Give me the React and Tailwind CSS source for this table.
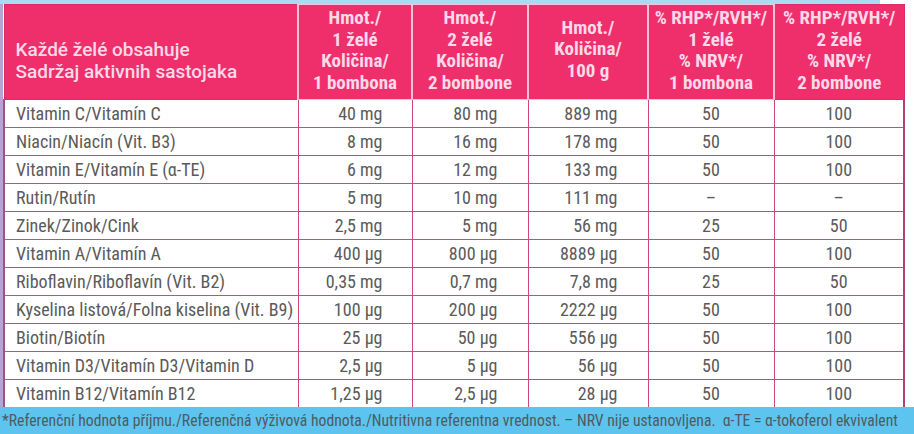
import React from "react";

const rows = [
  ["Vitamin C/Vitamín C", "40 mg", "80 mg", "889 mg", "50", "100"],
  ["Niacin/Niacín (Vit. B3)", "8 mg", "16 mg", "178 mg", "50", "100"],
  ["Vitamin E/Vitamín E (α-TE)", "6 mg", "12 mg", "133 mg", "50", "100"],
  ["Rutin/Rutín", "5 mg", "10 mg", "111 mg", "–", "–"],
  ["Zinek/Zinok/Cink", "2,5 mg", "5 mg", "56 mg", "25", "50"],
  ["Vitamin A/Vitamín A", "400 µg", "800 µg", "8889 µg", "50", "100"],
  ["Riboflavin/Riboflavín (Vit. B2)", "0,35 mg", "0,7 mg", "7,8 mg", "25", "50"],
  ["Kyselina listová/Folna kiselina (Vit. B9)", "100 µg", "200 µg", "2222 µg", "50", "100"],
  ["Biotin/Biotín", "25 µg", "50 µg", "556 µg", "50", "100"],
  ["Vitamin D3/Vitamín D3/Vitamin D", "2,5 µg", "5 µg", "56 µg", "50", "100"],
  ["Vitamin B12/Vitamín B12", "1,25 µg", "2,5 µg", "28 µg", "50", "100"],
];

export default function App() {
  return (
    <div className="w-[914px] h-[434px] bg-white overflow-hidden relative font-['Roboto',sans-serif] [font-stretch:80%]">
      <div className="h-[4px] w-[880px] bg-[#a9dcf3]" />
      <div className="flex">
        <div className="w-[3px] bg-[#b7a3d6]" />
        <table className="border-collapse table-fixed w-[900px] text-[#5a5a5a]">
          <colgroup>
            <col className="w-[294px]" />
            <col className="w-[114px]" />
            <col className="w-[116px]" />
            <col className="w-[120px]" />
            <col className="w-[126px]" />
            <col className="w-[130px]" />
          </colgroup>
          <thead>
            <tr className="h-[95px] bg-[#ef2f6c] text-[#fcd9e8] font-semibold text-[19px] leading-[21.5px]">
              <th className="border border-[#d92a62] text-left align-bottom pl-[11px] pb-[17px] font-medium [font-stretch:90%]">
                Každé želé obsahuje<br />Sadržaj aktivnih sastojaka
              </th>
              <th className="border border-[#f7c3d8] border-l-[2px] align-bottom pb-[6px]">
                Hmot./<br />1 želé<br />Količina/<br />1 bombona
              </th>
              <th className="border border-[#f7c3d8] border-l-[2px] align-bottom pb-[6px]">
                Hmot./<br />2 želé<br />Količina/<br />2 bombone
              </th>
              <th className="border border-[#f7c3d8] border-l-[2px] align-middle pb-[6px]">
                Hmot./<br />Količina/<br />100 g
              </th>
              <th className="border border-[#f7c3d8] border-l-[2px] align-bottom pb-[6px]">
                % RHP*/RVH*/<br />1 želé<br />% NRV*/<br />1 bombona
              </th>
              <th className="border border-[#d92a62] border-l-[2px] border-l-[#f7c3d8] align-bottom pb-[6px]">
                % RHP*/RVH*/<br />2 želé<br />% NRV*/<br />2 bombone
              </th>
            </tr>
          </thead>
          <tbody className="text-[18px] leading-[20px]">
            {rows.map((r, i) => (
              <tr key={i} className="h-[28px]">
                <td className="border border-[#d6447d] border-l-[#a0508a] border-l-2 pl-[11px] whitespace-nowrap">{r[0]}</td>
                <td className="border border-[#d6447d] text-right pr-[29px]">{r[1]}</td>
                <td className="border border-[#d6447d] text-right pr-[30px]">{r[2]}</td>
                <td className="border border-[#d6447d] text-right pr-[30px]">{r[3]}</td>
                <td className="border border-[#d6447d] border-l-[#6e2a45] text-center">{r[4]}</td>
                <td className="border border-[#d6447d] border-r-[#b0407a] border-r-2 text-center">{r[5]}</td>
              </tr>
            ))}
          </tbody>
        </table>
        <div className="flex-1 bg-white" />
      </div>
      <div className="absolute left-0 right-0 bottom-0 h-[27px] bg-[#5dc4ef] flex items-center pl-[2px] text-[15.7px] [font-stretch:75%] text-[#505a64] whitespace-nowrap">
        *Referenční hodnota příjmu./Referenčná výživová hodnota./Nutritivna referentna vrednost. – NRV nije ustanovljena.&nbsp;&nbsp;α-TE = α-tokoferol ekvivalent
      </div>
    </div>
  );
}
